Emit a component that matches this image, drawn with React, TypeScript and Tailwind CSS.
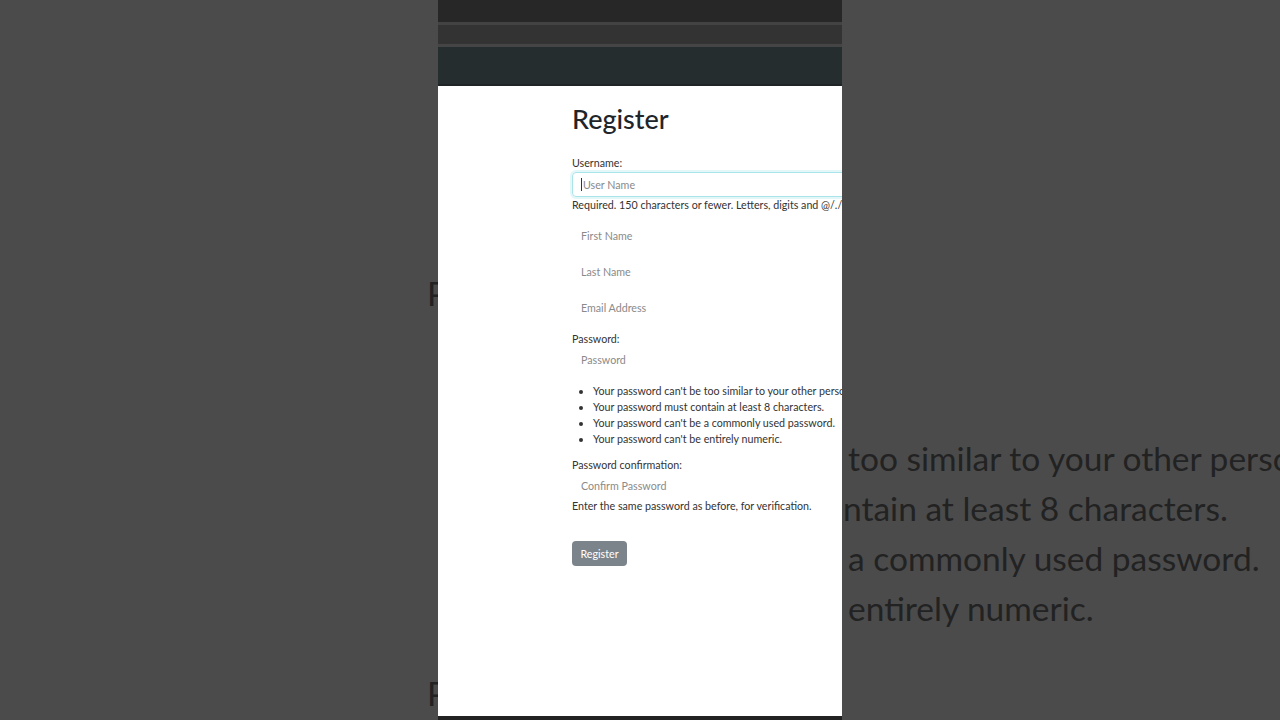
import React from "react";

const font = { fontFamily: '"Lato", "Liberation Sans", sans-serif' };

const hints = [
  "Your password can't be too similar to your other personal information.",
  "Your password must contain at least 8 characters.",
  "Your password can't be a commonly used password.",
  "Your password can't be entirely numeric.",
];

function Field({ placeholder }: { placeholder: string }) {
  return (
    <div className="h-[25px] w-[360px] flex items-center pl-[9px] text-[#8a8a8a]">
      {placeholder}
    </div>
  );
}

export default function App() {
  return (
    <div
      className="w-[1280px] h-[720px] flex bg-[#4b4b4b] overflow-hidden"
      style={font}
    >
      {/* Blurred backdrop, left side */}
      <div className="w-[438px] shrink-0 overflow-hidden text-[33.5px] leading-[50px] text-[#222222] whitespace-nowrap">
        <div className="pt-[268px] pl-[427px]">Password:</div>
        <div className="mt-[350px] pl-[427px]">Password confirmation:</div>
      </div>

      {/* Phone capture */}
      <div className="w-[404px] shrink-0 flex flex-col overflow-hidden">
        <div className="h-[22px] bg-[#272727]" />
        <div className="h-[3px] bg-[#434343]" />
        <div className="h-[19px] bg-[#333333]" />
        <div className="h-[3px] bg-[#454545]" />
        <div className="h-[37px] bg-[#262d2e]" />
        <div className="h-[2px] bg-[#1f2526]" />

        <main className="flex-1 bg-white pl-[134px] text-[10.7px] leading-[16px] text-[#333333] whitespace-nowrap">
          <h1 className="mt-[17px] text-[27px] leading-[32px] font-medium text-[#212529]">
            Register
          </h1>

          <div className="mt-[20px]">Username:</div>
          <div className="mt-[1px] h-[25px] w-[360px] flex items-center pl-[8px] rounded-[4px] border border-[#a9e4ea] shadow-[0_0_0_2px_#e3f7f9] text-[#8a8a8a]">
            <span className="w-px h-[13px] bg-[#333] mr-[1px]" />
            User Name
          </div>
          <div>Required. 150 characters or fewer. Letters, digits and @/./+/-/_ only.</div>

          <div className="mt-[10px] flex flex-col gap-[11px]">
            <Field placeholder="First Name" />
            <Field placeholder="Last Name" />
            <Field placeholder="Email Address" />
          </div>

          <div className="mt-[11px]">Password:</div>
          <Field placeholder="Password" />

          <ul className="mt-[11px] list-disc pl-[21px]">
            {hints.map((h) => (
              <li key={h}>{h}</li>
            ))}
          </ul>

          <div className="mt-[10px]">Password confirmation:</div>
          <Field placeholder="Confirm Password" />
          <div>Enter the same password as before, for verification.</div>

          <button className="mt-[27px] h-[25px] w-[55px] rounded-[4px] bg-[#7b848b] text-white text-[10.7px]">
            Register
          </button>
        </main>

        <div className="h-[4px] bg-[#222222]" />
      </div>

      {/* Blurred backdrop, right side */}
      <div className="flex-1 overflow-hidden text-[33.5px] leading-[50px] text-[#222222] whitespace-nowrap">
        <div className="pt-[433px] pl-[6px]">too similar to your other personal information.</div>
        <div className="pl-[1px]">ntain at least 8 characters.</div>
        <div className="pl-[6px]">a commonly used password.</div>
        <div className="pl-[6px]">entirely numeric.</div>
      </div>
    </div>
  );
}
